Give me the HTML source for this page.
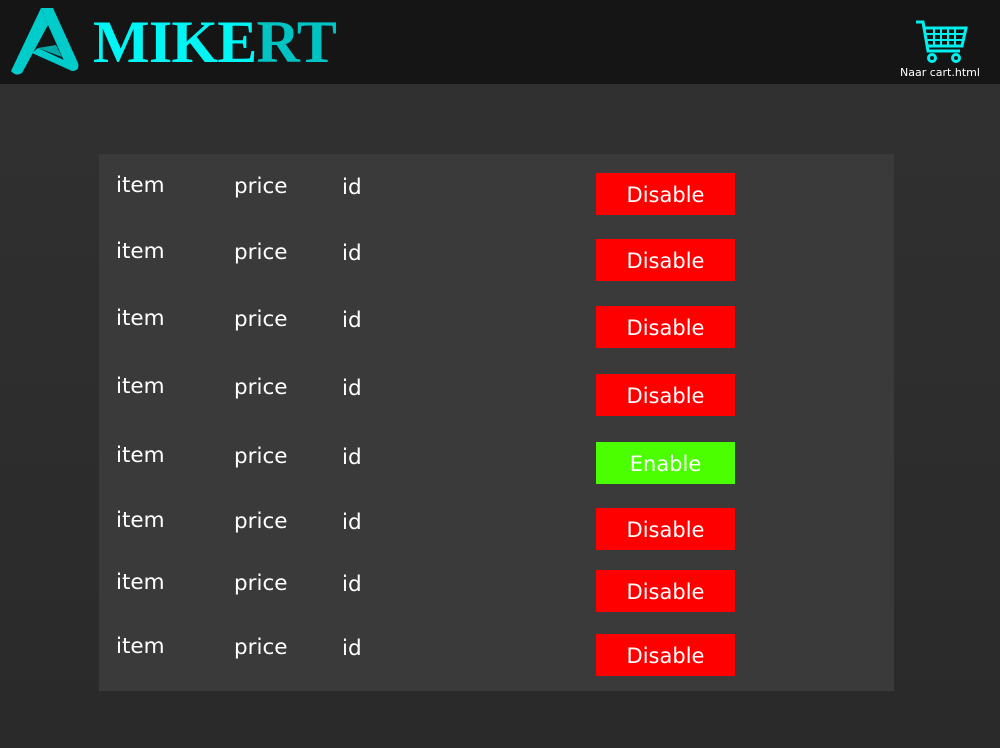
<!DOCTYPE html>
<html><head><style>
body{margin:0;width:1000px;height:748px;background:linear-gradient(#313131,#2a2a2a);font-family:"DejaVu Sans","Liberation Sans",sans-serif;overflow:hidden;position:relative}
.hdr{position:absolute;left:0;top:0;width:1000px;height:84px;background:#151515}
.logo{position:absolute;left:93px;top:2px;font-family:"Liberation Serif",serif;font-weight:bold;font-size:60px;letter-spacing:-0.8px;color:#00f5f5;line-height:80px}
.logo span{color:#00c4c4}
.cart{position:absolute;left:900px;top:66px;font-size:11px;color:#fff}
.panel{position:absolute;left:99px;top:154px;width:795px;height:537px;background:#3a3a3a}
.t{position:absolute;color:#fff;font-size:21.5px}
.b{position:absolute;left:596px;width:139px;height:42px;background:#ff0000;color:#fff;font-size:21px;text-align:center;line-height:44px}
.g{background:#4cff00}
</style></head><body>
<div class="hdr">
<svg style="position:absolute;left:8px;top:5px" width="74" height="72" viewBox="0 0 74 72">
<path d="M33 3 L45 3 L70 58 Q72 66 64 66 L57 58 L40 20 Z" fill="#00cccc"/>
<path d="M33 3 L40 20 L14 68 Q8 72 3 66 Z" fill="#00cccc"/>
<path d="M24 48 L64 66 L58 56 L30 43 Z" fill="#00cccc"/>
<path d="M30 43 L48 40 L54 52 Z" fill="#00a8a8"/>
</svg>
<div class="logo">MIKE<span>RT</span></div>
<svg style="position:absolute;left:914px;top:19px" width="54" height="46" viewBox="0 0 54 46" fill="none" stroke="#00f0f0" stroke-width="3">
<path d="M2 3 H9 L14 32 H46"/><path d="M11 9 H52 L48 27 H14"/>
<path d="M20 9 V27 M27 9 V27 M34 9 V27 M41 9 V27 M12 15 H50 M13 21 H49" stroke-width="2"/>
<circle cx="18" cy="39" r="3.5"/><circle cx="42" cy="39" r="3.5"/>
</svg>
<div class="cart">Naar cart.html</div>
</div>
<div class="panel"></div>
<div id="rows"></div>
<script>
var ys=[186,252,319,387,456,521,583,647],bs=[173,239,306,374,442,508,570,634],h='';
for(var i=0;i<8;i++){var y=ys[i]-13;
h+='<div class="t" style="left:116px;top:'+y+'px">item</div><div class="t" style="left:234px;top:'+(y+1)+'px">price</div><div class="t" style="left:342px;top:'+(y+2)+'px">id</div>';
h+='<div class="b'+(i==4?' g':'')+'" style="top:'+bs[i]+'px">'+(i==4?'Enable':'Disable')+'</div>';}
document.getElementById('rows').innerHTML=h;
</script>
</body></html>
